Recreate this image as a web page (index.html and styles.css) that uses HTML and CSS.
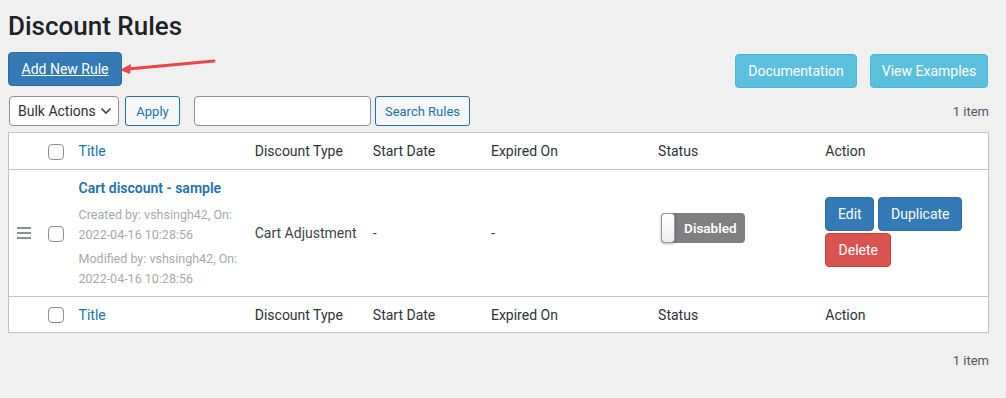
FILE: index.html
```html
<!DOCTYPE html>
<html>
<head>
<meta charset="utf-8">
<link rel="stylesheet" href="styles.css">
</head>
<body>
<div class="wrap">
  <h1 class="page-title">Discount Rules</h1>
  <div class="top-bar">
    <div class="add-wrap">
      <a class="btn btn-primary btn-add" href="#">Add New Rule</a>
      <svg class="arrow" width="100" height="20" viewBox="0 0 100 20">
        <path d="M96 4 L10 12" stroke="#ef4444" stroke-width="3" stroke-linecap="round" fill="none"/>
        <path d="M2 13 L13 7 L12 17 Z" fill="#ef4444"/>
      </svg>
    </div>
    <div class="top-links">
      <a class="btn btn-info btn-doc" href="#">Documentation</a>
      <a class="btn btn-info btn-ex" href="#">View Examples</a>
    </div>
  </div>
  <div class="tablenav">
    <div class="nav-left">
      <div class="select">Bulk Actions
        <svg width="12" height="8" viewBox="0 0 12 8"><path d="M1.5 1.5 L6 6 L10.5 1.5" stroke="#3c434a" stroke-width="1.6" fill="none"/></svg>
      </div>
      <button class="btn-secondary btn-apply">Apply</button>
      <input class="search" type="text">
      <button class="btn-secondary btn-search">Search Rules</button>
    </div>
    <div class="count">1 item</div>
  </div>
  <table class="rules">
    <colgroup>
      <col class="c-handle"><col class="c-check"><col class="c-title"><col class="c-type"><col class="c-start"><col class="c-exp"><col class="c-status"><col class="c-action">
    </colgroup>
    <thead>
      <tr>
        <th></th>
        <th><span class="cb"></span></th>
        <th class="link">Title</th>
        <th>Discount Type</th>
        <th>Start Date</th>
        <th>Expired On</th>
        <th>Status</th>
        <th>Action</th>
      </tr>
    </thead>
    <tbody>
      <tr>
        <td class="handle"><span class="bars"><i></i><i></i><i></i></span></td>
        <td><span class="cb"></span></td>
        <td class="title-cell">
          <div class="rule-name">Cart discount - sample</div>
          <div class="meta">Created by: vshsingh42, On:<br>2022-04-16 10:28:56</div>
          <div class="meta">Modified by: vshsingh42, On:<br>2022-04-16 10:28:56</div>
        </td>
        <td>Cart Adjustment</td>
        <td>-</td>
        <td>-</td>
        <td>
          <div class="toggle"><span class="knob"></span><span class="tlabel">Disabled</span></div>
        </td>
        <td>
          <div class="actions">
            <a class="btn btn-primary btn-sm btn-edit" href="#">Edit</a>
            <a class="btn btn-primary btn-sm btn-dup" href="#">Duplicate</a>
            <a class="btn btn-danger btn-sm btn-del" href="#">Delete</a>
          </div>
        </td>
      </tr>
    </tbody>
    <tfoot>
      <tr>
        <th></th>
        <th><span class="cb"></span></th>
        <th class="link">Title</th>
        <th>Discount Type</th>
        <th>Start Date</th>
        <th>Expired On</th>
        <th>Status</th>
        <th>Action</th>
      </tr>
    </tfoot>
  </table>
  <div class="count bottom">1 item</div>
</div>
</body>
</html>
```

FILE: styles.css
```css
* { box-sizing: border-box; }
html, body { margin: 0; padding: 0; }
body {
  background: #f0f0f1;
  font-family: Roboto, "Liberation Sans", sans-serif;
  font-size: 14px;
  color: #3c434a;
}
.wrap { padding: 0 17px 0 8px; }
.page-title {
  margin: 0;
  padding: 11px 0 0 0;
  font-size: 26px;
  font-weight: 500;
  line-height: 30px;
  color: #1d2327;
}
.top-bar {
  display: flex;
  justify-content: space-between;
  align-items: flex-start;
  margin-top: 11px;
}
.add-wrap { position: relative; }
.arrow { position: absolute; left: 110px; top: 5px; }
.btn {
  display: inline-flex;
  align-items: center;
  justify-content: center;
  height: 34px;
  padding: 0 6px;
  border-radius: 4px;
  border: 1px solid transparent;
  color: #fff;
  text-decoration: none;
  font-size: 14px;
  white-space: nowrap;
}
.btn-primary { background: #337ab7; border-color: #2e6da4; }
.btn-add { width: 114px; text-decoration: underline; }
.btn-info { background: #5bc0de; border-color: #46b8da; }
.btn-danger { background: #d9534f; border-color: #d43f3a; }
.top-links { display: flex; gap: 13px; margin-top: 2px; padding-right: 1px; }
.btn-doc { width: 122px; }
.btn-ex { width: 118px; }

.tablenav {
  display: flex;
  justify-content: space-between;
  align-items: center;
  margin-top: 8px;
  height: 30px;
}
.nav-left { display: flex; align-items: center; padding-left: 1px; }
.select {
  width: 110px;
  height: 30px;
  border: 1px solid #8c8f94;
  border-radius: 4px;
  background: #fff;
  display: flex;
  align-items: center;
  justify-content: space-between;
  padding: 0 6px 0 8px;
  color: #2c3338;
  white-space: nowrap;
}
.btn-secondary {
  height: 30px;
  border: 1px solid #2271b1;
  border-radius: 3px;
  background: #f6f7f7;
  color: #2271b1;
  font-family: inherit;
  font-size: 13px;
  padding: 0 4px;
  white-space: nowrap;
}
.btn-apply { width: 55px; margin-left: 6px; }
.search {
  width: 177px;
  height: 30px;
  border: 1px solid #8c8f94;
  border-radius: 4px;
  background: #fff;
  margin-left: 14px;
}
.btn-search { width: 95px; margin-left: 4px; }
.count { font-size: 13px; color: #50575e; }
.count.bottom { text-align: right; margin-top: 20px; }

.rules {
  width: 981px;
  border-collapse: collapse;
  table-layout: fixed;
  background: #fff;
  border: 1px solid #c3c4c7;
  margin-top: 6px;
}
.c-handle { width: 31px; }
.c-check { width: 31px; }
.c-title { width: 176px; }
.c-type { width: 118px; }
.c-start { width: 118px; }
.c-exp { width: 167px; }
.c-status { width: 167px; }
.c-action { width: 171px; }
.rules th {
  text-align: left;
  font-weight: 400;
  color: #2c3338;
  height: 37px;
  padding: 0 8px;
  vertical-align: middle;
}
.rules thead th { border-bottom: 1px solid #c3c4c7; }
.rules tfoot th { border-top: 1px solid #c3c4c7; height: 36px; }
.rules th.link { color: #2271b1; }
.rules td {
  padding: 8px 8px;
  vertical-align: middle;
  color: #3c434a;
  height: 126px;
  white-space: nowrap;
}
.cb {
  display: block;
  width: 16px;
  height: 16px;
  border: 1px solid #8c8f94;
  border-radius: 4px;
  background: #fff;
  margin-top: 1px;
}
.rules td.handle { padding-left: 8px; }
.bars { display: flex; flex-direction: column; gap: 3px; width: 14px; }
.bars i { display: block; height: 2px; background: #8c8f94; }
.rules td.title-cell { padding-right: 0; }
.rule-name {
  color: #2271b1;
  font-weight: 600;
  font-size: 14px;
  line-height: 20px;
  margin-bottom: 7px;
}
.meta {
  color: #a7aaad;
  font-size: 12.5px;
  line-height: 19.5px;
  margin-bottom: 5px;
}
.meta:last-child { margin-bottom: 0; }
.toggle {
  width: 84px;
  height: 30px;
  background: #808080;
  border-radius: 4px;
  display: flex;
  align-items: center;
  margin-left: 3px;
  margin-bottom: 11px;
}
.knob {
  width: 14px;
  height: 30px;
  background: linear-gradient(#ffffff, #eeeeee);
  border: 1px solid #999;
  border-radius: 4px;
  box-shadow: 0 1px 3px rgba(0,0,0,0.3);
}
.tlabel {
  color: #fff;
  font-weight: 600;
  font-size: 13.5px;
  margin-left: 9px;
}
.actions {
  display: flex;
  flex-wrap: wrap;
  gap: 2px 4px;
  width: 150px;
  margin-bottom: 2px;
}
.btn-edit { width: 49px; }
.btn-dup { width: 84px; }
.btn-del { width: 66px; }
```
